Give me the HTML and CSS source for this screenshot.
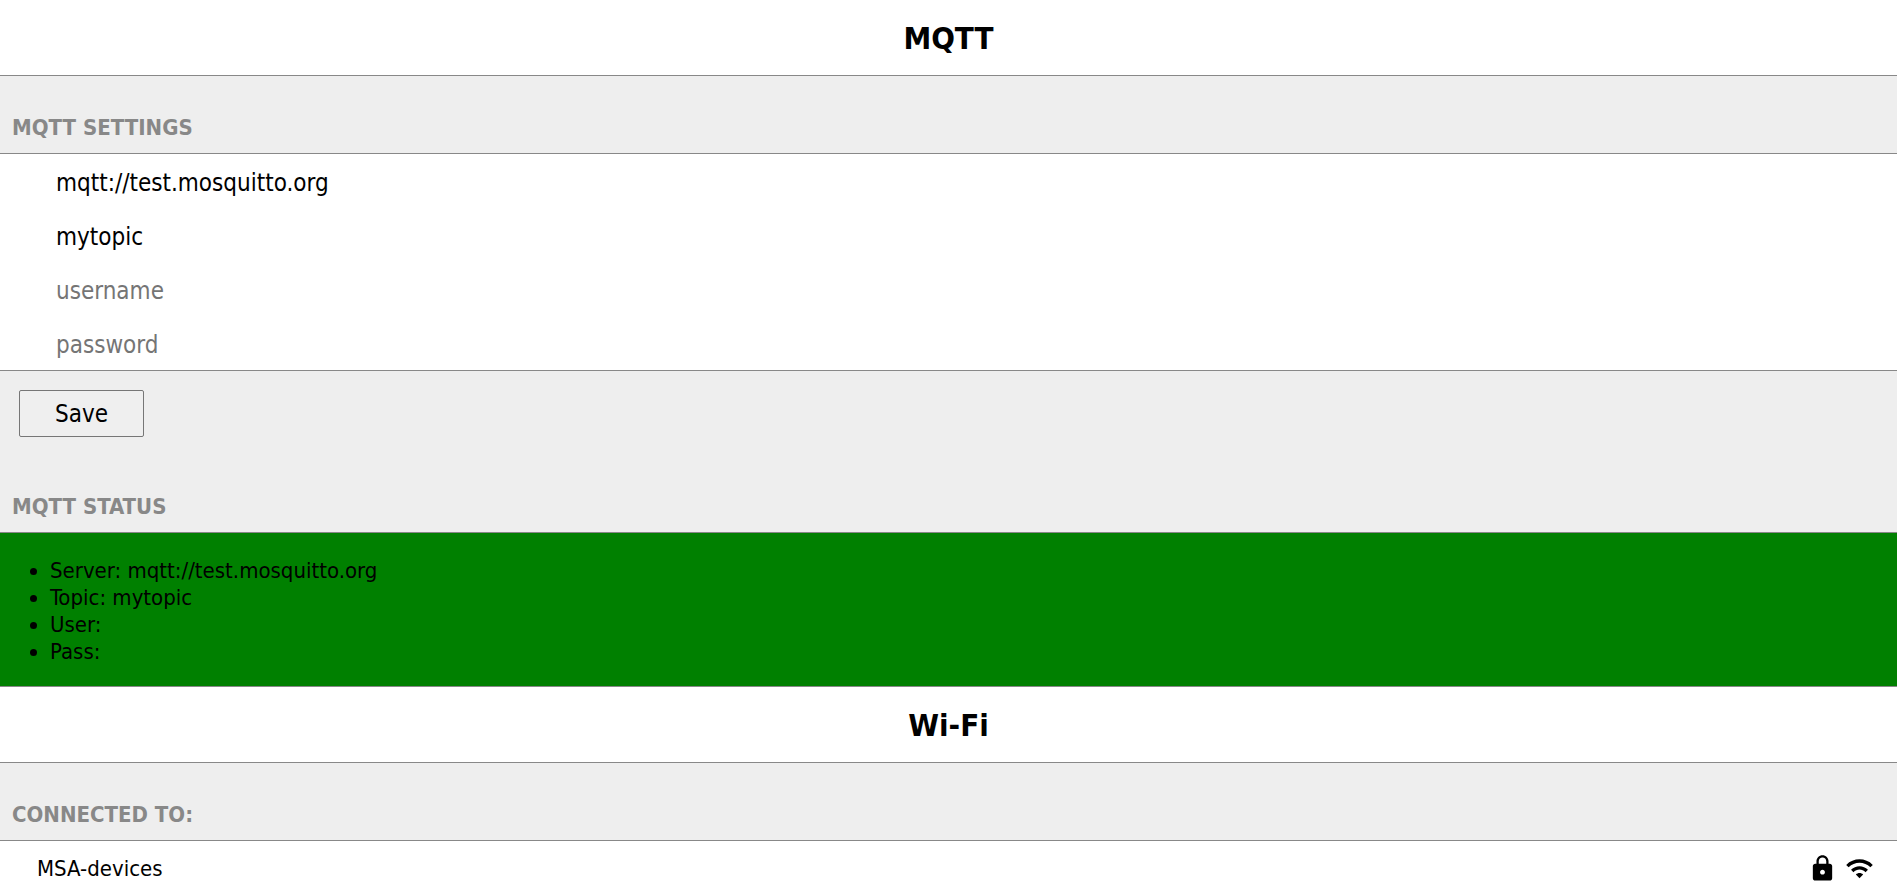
FILE: index.html
```
<!DOCTYPE html>
<html lang="en">
<head>
<meta charset="utf-8">
<title>MQTT</title>
<link rel="stylesheet" href="styles.css">
</head>
<body>
<header><h1>MQTT</h1></header>
<form>
<h3>MQTT SETTINGS</h3>
<div class="fields">
<input type="text" aria-label="server" placeholder="server" value="mqtt://test.mosquitto.org">
<input type="text" aria-label="topic" placeholder="topic" value="mytopic">
<input type="text" aria-label="username" placeholder="username">
<input type="password" aria-label="password" placeholder="password">
</div>
<div class="buttons"><button type="button">Save</button></div>
</form>
<section>
<h3>MQTT STATUS</h3>
<div class="status">
<ul>
<li>Server: mqtt://test.mosquitto.org</li>
<li>Topic: mytopic</li>
<li>User:</li>
<li>Pass:</li>
</ul>
</div>
</section>
<header><h1>Wi-Fi</h1></header>
<section>
<h3>CONNECTED TO:</h3>
<div class="network">
<span class="ssid">MSA-devices</span>
<svg class="icon" viewBox="0 0 24 24" aria-hidden="true"><path d="M18 8h-1V6c0-2.760-2.240-5-5-5S7 3.240 7 6v2H6c-1.100 0-2 .9-2 2v10c0 1.100.9 2 2 2h12c1.100 0 2-.9 2-2V10c0-1.100-.9-2-2-2zm-6 9c-1.100 0-2-.9-2-2s.9-2 2-2 2 .9 2 2-.9 2-2 2zm3.100-9H8.900V6c0-1.710 1.390-3.100 3.100-3.100s3.100 1.390 3.100 3.100v2z"/></svg>
<svg class="icon" viewBox="0 0 24 24" aria-hidden="true"><path d="M1 9l2 2c4.970-4.970 13.030-4.970 18 0l2-2C16.930 2.930 7.080 2.930 1 9zm8 8l3 3 3-3c-1.650-1.660-4.340-1.660-6 0zm-4-4l2 2c2.760-2.760 7.240-2.760 10 0l2-2C15.140 9.140 8.870 9.140 5 13z"/></svg>
</div>
</section>
</body>
</html>
```
FILE: styles.css
```
* { box-sizing: border-box; }
body {
  margin: 0;
  background: #eee;
  color: #000;
  font-family: Tahoma, "DejaVu Sans Condensed", "Noto Sans", sans-serif;
  font-size: 22px;
  line-height: 27px;
}
header {
  background: #fff;
  border-bottom: 1px solid #888;
  padding: 18px 0 17px;
  text-align: center;
}
h1 { margin: 0; font-size: 31px; line-height: 40px; }
h3 {
  margin: 0;
  padding: 38px 12px 11px;
  color: #888;
  font-size: 22px;
  line-height: 28px;
}
.fields {
  background: #fff;
  border-top: 1px solid #888;
  border-bottom: 1px solid #888;
}
.fields input {
  display: block;
  width: 100%;
  height: 54px;
  padding: 4px 56px 0;
  border: 0;
  outline: 0;
  background: transparent;
  font: inherit;
  font-size: 24px;
}
.fields input::placeholder { color: #757575; opacity: 1; }
.buttons { display: flex; padding: 19px 19px 18px; }
button {
  width: 125px;
  height: 47px;
  padding: 2px 0 0;
  border: 1px solid #767676;
  border-radius: 2px;
  background: #efefef;
  color: #000;
  font: inherit;
  font-size: 24px;
}
.status {
  background: green;
  border-top: 1px solid #888;
  border-bottom: 1px solid #888;
  padding: 24px 0 21px;
}
ul { margin: 0; padding: 0 0 0 50px; }
.network {
  display: flex;
  align-items: center;
  gap: 8px;
  min-height: 54px;
  padding: 0 23px 0 37px;
  background: #fff;
  border-top: 1px solid #888;
  box-sizing: content-box;
}
.ssid { flex: 1; }
.icon { width: 29px; height: 29px; }
```
